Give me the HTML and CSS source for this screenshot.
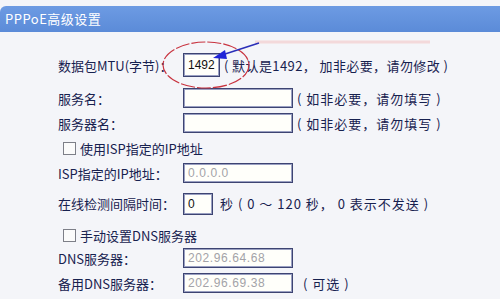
FILE: index.html
```html
<!DOCTYPE html>
<html lang="zh-CN">
<head>
    <meta charset="UTF-8">
    <title>PPPoE高级设置</title>
    <link rel="stylesheet" href="styles.css">
</head>
<body>
    <div class="panel">
        <div class="panel-title">PPPoE高级设置</div>

        <div class="form">
            <div class="row row-mtu">
                <span class="label">数据包MTU(字节)：</span>
                <span class="field mtu">1492</span>
                <span class="hint">( 默认是1492， 加非必要，请勿修改 )</span>
            </div>
            <div class="row row-first">
                <span class="label">服务名：</span>
                <span class="field wide"></span>
                <span class="hint">( 如非必要，请勿填写 )</span>
            </div>
            <div class="row">
                <span class="label">服务器名：</span>
                <span class="field wide"></span>
                <span class="hint">( 如非必要，请勿填写 )</span>
            </div>
            <div class="row check-row">
                <span class="checkbox"></span>
                <span class="check-text">使用ISP指定的IP地址</span>
            </div>
            <div class="row">
                <span class="label">ISP指定的IP地址：</span>
                <span class="field wide disabled">0.0.0.0</span>
            </div>
            <div class="row row-interval">
                <span class="label">在线检测间隔时间：</span>
                <span class="field short">0</span>
                <span class="hint">秒 ( 0 ～ 120 秒， 0 表示不发送 )</span>
            </div>
            <div class="row check-row row-dns-check">
                <span class="checkbox"></span>
                <span class="check-text">手动设置DNS服务器</span>
            </div>
            <div class="row row-dns">
                <span class="label">DNS服务器：</span>
                <span class="field wide disabled">202.96.64.68</span>
            </div>
            <div class="row">
                <span class="label">备用DNS服务器：</span>
                <span class="field wide disabled">202.96.69.38</span>
                <span class="hint optional">( 可选 )</span>
            </div>
        </div>

        <!-- hand-drawn annotation over the MTU field -->
        <svg class="markup" width="500" height="299" viewBox="0 0 500 299">
            <line x1="255" y1="42" x2="430" y2="42" stroke="#f3c8c8" stroke-width="3" opacity="0.6"/>
            <ellipse cx="206" cy="65" rx="43" ry="23" fill="none" stroke="#c8333f" stroke-width="1.2" stroke-dasharray="14 2"/>
            <line x1="259" y1="43" x2="222" y2="55" stroke="#2a2fb8" stroke-width="1.5"/>
            <polygon points="213,58 225,50 227,59" fill="#1f24d8"/>
        </svg>
    </div>
</body>
</html>
```

FILE: styles.css
```css
body {
    margin: 0;
    background: #ffffff;
    font-family: "Noto Sans CJK SC", "DejaVu Sans", sans-serif;
    font-size: 13px;
    color: #17214f;
}
.panel {
    position: relative;
    width: 500px;
    height: 299px;
    overflow: hidden;
    background: #f4f5f9;
}
.panel-title {
    margin-top: 6px;
    height: 26px;
    line-height: 26px;
    padding-left: 5px;
    border-top-left-radius: 6px;
    background: linear-gradient(#6d9be3, #5b8bd8);
    color: #ffffff;
    font-size: 13px;
    letter-spacing: 0.5px;
}
.form {
    padding: 21px 0 0 58px;
}
.row {
    display: flex;
    align-items: center;
    height: 24px;
    margin-top: 1px;
}
.row-mtu {
    margin-top: 0;
}
.row-first {
    margin-top: 9px;
}
.row-interval {
    margin-top: 6px;
    height: 25px;
}
.row-dns-check {
    margin-top: 7px;
}
.row-dns {
    margin-top: -1px;
}
.label {
    width: 125px;
    flex: none;
    white-space: nowrap;
}
.field {
    box-sizing: border-box;
    height: 20px;
    line-height: 18px;
    padding-left: 4px;
    border: 1px solid #3d4472;
    box-shadow: inset 0 0 0 1px #9aa0c2;
    background: #fffffa;
    color: #111111;
    font-family: "Liberation Sans", "DejaVu Sans", sans-serif;
    font-size: 12px;
}
.field.wide {
    width: 110px;
}
.field.mtu {
    width: 37px;
    height: 24px;
    line-height: 22px;
}
.field.short {
    width: 30px;
    height: 22px;
    line-height: 20px;
}
.field.disabled {
    color: #a3a3a8;
    letter-spacing: 0.6px;
}
.hint {
    margin-left: 4px;
    white-space: nowrap;
    letter-spacing: 1px;
}
.row-mtu .hint {
    letter-spacing: 0.4px;
}
.row-interval .hint {
    margin-left: 7px;
}
.hint.optional {
    margin-left: 10px;
}
.check-row {
    padding-left: 5px;
}
.checkbox {
    box-sizing: border-box;
    width: 13px;
    height: 13px;
    border: 1px solid #7d7f88;
    background: #fbfbfb;
    margin-right: 4px;
}
.markup {
    position: absolute;
    left: 0;
    top: 0;
    pointer-events: none;
}
```
